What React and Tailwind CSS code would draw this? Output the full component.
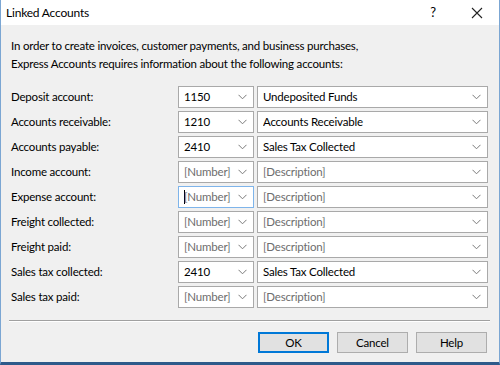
import React from 'react';

const rows = [
    { label: 'Deposit account:', num: '1150', desc: 'Undeposited Funds' },
    { label: 'Accounts receivable:', num: '1210', desc: 'Accounts Receivable' },
    { label: 'Accounts payable:', num: '2410', desc: 'Sales Tax Collected' },
    { label: 'Income account:', num: null, desc: null },
    { label: 'Expense account:', num: null, desc: null, focus: true },
    { label: 'Freight collected:', num: null, desc: null },
    { label: 'Freight paid:', num: null, desc: null },
    { label: 'Sales tax collected:', num: '2410', desc: 'Sales Tax Collected' },
    { label: 'Sales tax paid:', num: null, desc: null },
];

const Chevron = () => (
    <svg width="9" height="6" viewBox="0 0 9 6" className="shrink-0">
        <path d="M0.5 0.8 L4.5 4.8 L8.5 0.8" fill="none" stroke="#7a7a7a" strokeWidth="1" />
    </svg>
);

const Combo = ({ value, placeholder, width, focus }) => (
    <div
        className={`h-[22px] ${width} bg-white border ${focus ? 'border-[#7eb4ea]' : 'border-[#a9a9a9]'} flex items-center pl-[5px] pr-[6px]`}
    >
        {focus && <span className="w-px h-[14px] bg-black -mr-px" />}
        <span className={`flex-1 overflow-hidden whitespace-nowrap ${value ? 'text-black' : 'text-[#6d6d6d]'}`}>
            {value || placeholder}
        </span>
        <Chevron />
    </div>
);

const App = () => {
    return (
        <div
            className="w-[500px] h-[365px] flex flex-col bg-[#f0f0f0] border-x border-[#7ba6d3] border-b-[3px] border-b-[#2d5a8a] text-[11.5px] tracking-[-0.2px] text-black overflow-hidden"
            style={{ fontFamily: 'Lato, "Noto Sans", "Liberation Sans", sans-serif' }}
        >
            <div className="h-[25px] bg-white flex items-center pl-[5px] shrink-0">
                <span className="flex-1 text-[12px]">Linked Accounts</span>
                <span className="w-[14px] text-center text-[13px] mr-[31px]">?</span>
                <svg width="12" height="12" viewBox="0 0 12 12" className="mr-[16px]">
                    <path d="M1 1 L11 11 M11 1 L1 11" stroke="#222" strokeWidth="1.1" />
                </svg>
            </div>
            <div className="flex-1 flex flex-col px-[10px] pt-[12px]">
                <p className="leading-[18px]">
                    In order to create invoices, customer payments, and business purchases,
                    <br />
                    Express Accounts requires information about the following accounts:
                </p>
                <div className="flex flex-col gap-[3px] mt-[13px]">
                    {rows.map((r) => (
                        <div key={r.label} className="flex items-center">
                            <span className="w-[167px]">{r.label}</span>
                            <Combo value={r.num} placeholder="[Number]" width="w-[76px]" focus={r.focus} />
                            <div className="w-[3px]" />
                            <Combo value={r.desc} placeholder="[Description]" width="w-[231px]" />
                        </div>
                    ))}
                </div>
                <div className="mt-[12px] mr-[-1px] -ml-[2px] border-t border-[#a0a0a0] border-b border-b-white" />
                <div className="flex justify-end gap-[8px] mt-[10px] pr-[2px]">
                    <button className="w-[71px] h-[21px] bg-[#e1e1e1] border border-[#0078d7] shadow-[inset_0_0_0_1px_#0078d7]">OK</button>
                    <button className="w-[71px] h-[21px] bg-[#e1e1e1] border border-[#adadad]">Cancel</button>
                    <button className="w-[71px] h-[21px] bg-[#e1e1e1] border border-[#adadad]">Help</button>
                </div>
            </div>
        </div>
    );
};

export default App;
